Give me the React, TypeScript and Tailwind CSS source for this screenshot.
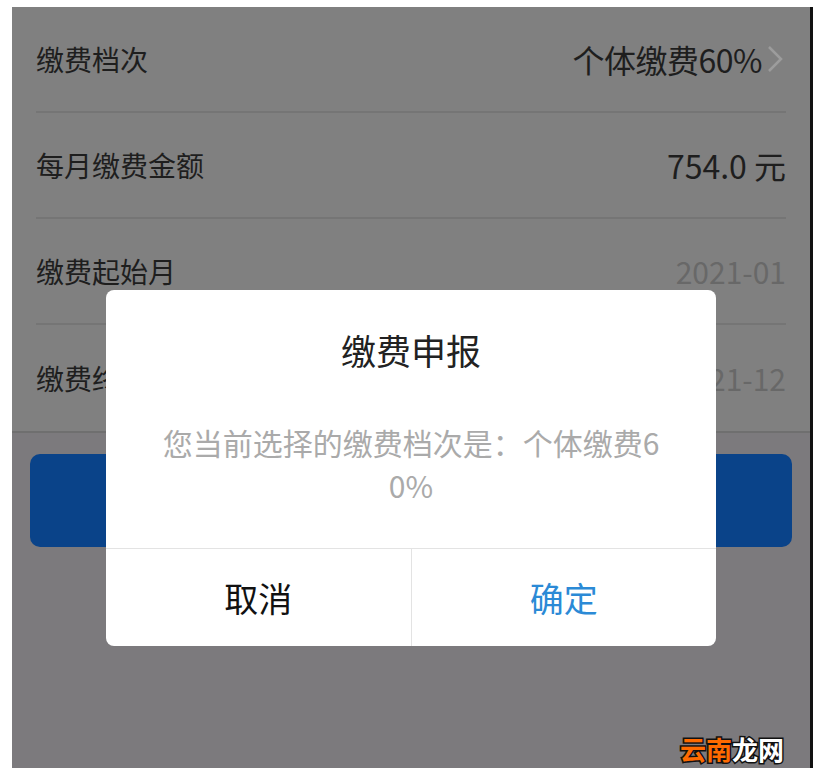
import React from "react";

const font = { fontFamily: '"Noto Sans CJK SC", "Noto Sans", sans-serif' };

const Row: React.FC<{ label: string; children: React.ReactNode; line?: boolean }> = ({
  label,
  children,
  line = true,
}) => (
  <div className="px-[24px]">
    <div
      className={
        "flex h-[106px] items-center justify-between " +
        (line ? "border-b-2 border-[#757575]" : "")
      }
    >
      <span className="text-[28px] text-[#1e1e1e]">{label}</span>
      {children}
    </div>
  </div>
);

export default function App() {
  return (
    <div className="h-[778px] w-[821px] bg-white pt-[7px] pl-[12px]" style={font}>
      <div className="relative h-[761px] w-[801px] border-r-[3px] border-[#111] bg-[#7c7a7d]">
        {/* list under the mask */}
        <div className="border-b-2 border-[#6f6f6f] bg-[#808080]">
          <Row label="缴费档次">
            <div className="flex items-center gap-[4px] pr-[2px]">
              <span className="text-[32px] tracking-[-0.5px] text-[#1e1e1e]">个体缴费60%</span>
              <svg width="18" height="30" viewBox="0 0 18 30" fill="none">
                <polyline points="3,3 15,15 3,27" stroke="#9c9c9c" strokeWidth="2.5" />
              </svg>
            </div>
          </Row>
          <Row label="每月缴费金额">
            <span className="text-[32px] text-[#1e1e1e]">754.0 元</span>
          </Row>
          <Row label="缴费起始月">
            <span className="text-[30px] text-[#686868]">2021-01</span>
          </Row>
          <Row label="缴费终止月" line={false}>
            <span className="text-[30px] text-[#686868]">2021-12</span>
          </Row>
        </div>

        <div className="px-[18px] pt-[21px]">
          <div className="h-[93px] rounded-[10px] bg-[#0a4389]" />
        </div>

        {/* dialog */}
        <div className="absolute left-[94px] top-[283px] flex h-[356px] w-[610px] flex-col rounded-[8px] bg-white">
          <div className="pt-[38px] text-center text-[35px] leading-[44px] text-[#222]">缴费申报</div>
          <div className="break-all px-[52px] pt-[49px] text-center text-[30px] leading-[43px] text-[#aaaaaa]">
            您当前选择的缴费档次是：个体缴费60%
          </div>
          <div className="mt-auto flex h-[98px] border-t border-[#e3e3e3]">
            <div className="flex flex-1 items-center justify-center border-r border-[#e3e3e3] text-[34px] text-[#111]">
              取消
            </div>
            <div className="flex flex-1 items-center justify-center text-[34px] text-[#2b8ad6]">
              确定
            </div>
          </div>
        </div>

        {/* watermark */}
        <div className="absolute bottom-[4px] right-[26px] text-[26px] font-bold leading-[30px] [-webkit-text-stroke:3px_#111] [paint-order:stroke_fill]">
          <span className="text-[#ff6a00]">云南</span>
          <span className="text-white">龙网</span>
        </div>
      </div>
    </div>
  );
}
